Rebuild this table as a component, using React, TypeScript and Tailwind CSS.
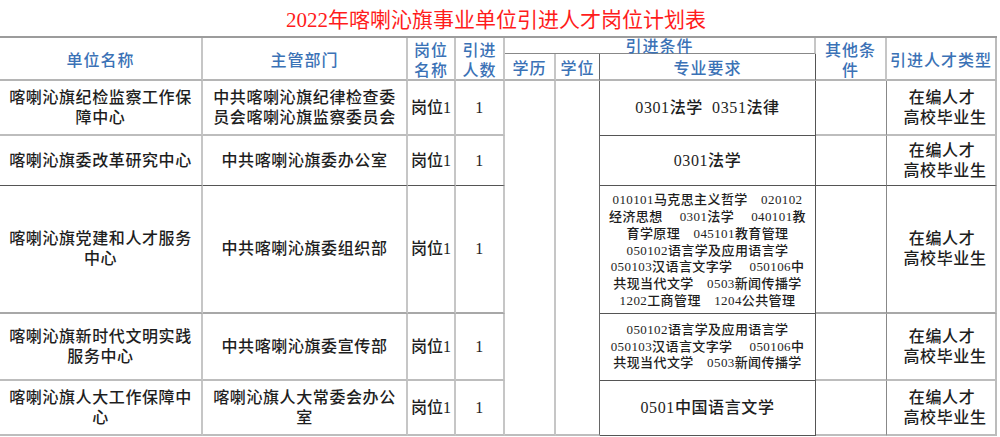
import React from "react";

const HF = "text-[#3b72b6] font-['Noto_Sans_CJK_SC',sans-serif] font-medium text-center align-middle p-0 text-[16px]";
const H = `${HF} leading-[20px] tracking-[1px]`;
const BF = "text-[#1e1e1e] font-['Liberation_Serif','Noto_Sans_CJK_SC',serif] font-medium text-center align-middle p-0";
const B = `${BF} text-[16px] leading-[20px] tracking-[0.6px]`;
const BS = `${BF} text-[13px] leading-[16.8px] tracking-[0.4px]`;
const V = "border-r-2 border-r-[#c6c6c6]";
const ZV = "border-r border-r-[#555]";

function L({ children }: { children: React.ReactNode }) {
  return <div className="whitespace-pre text-center">{children}</div>;
}

type Row = {
  h: string;
  unit: React.ReactNode;
  dept: React.ReactNode;
  major: React.ReactNode;
  majorSmall?: boolean;
  bb: string;
};

const rows: Row[] = [
  {
    h: "h-[55px]",
    unit: <>喀喇沁旗纪检监察工作保<br />障中心</>,
    dept: <>中共喀喇沁旗纪律检查委<br />员会喀喇沁旗监察委员会</>,
    major: <span className="whitespace-pre">0301法学  0351法律</span>,
    bb: "border-b-2 border-b-[#bdbdbd]",
  },
  {
    h: "h-[50px]",
    unit: <>喀喇沁旗委改革研究中心</>,
    dept: <>中共喀喇沁旗委办公室</>,
    major: <>0301法学</>,
    bb: "border-b border-b-[#555]",
  },
  {
    h: "h-[128px]",
    unit: <>喀喇沁旗党建和人才服务<br />中心</>,
    dept: <>中共喀喇沁旗委组织部</>,
    majorSmall: true,
    major: (
      <div className="pt-[3px]">
        <L>010101马克思主义哲学　020102</L>
        <L>经济思想　 0301法学　 040101教</L>
        <L>育学原理　045101教育管理</L>
        <L>050102语言学及应用语言学</L>
        <L>050103汉语言文字学　 050106中</L>
        <L>共现当代文学　0503新闻传播学</L>
        <L>1202工商管理　1204公共管理</L>
      </div>
    ),
    bb: "border-b-2 border-b-[#a8a8a8]",
  },
  {
    h: "h-[67px]",
    unit: <>喀喇沁旗新时代文明实践<br />服务中心</>,
    dept: <>中共喀喇沁旗委宣传部</>,
    majorSmall: true,
    major: (
      <div>
        <L>050102语言学及应用语言学</L>
        <L>050103汉语言文字学　 050106中</L>
        <L>共现当代文学　0503新闻传播学</L>
      </div>
    ),
    bb: "border-b-2 border-b-[#bdbdbd]",
  },
  {
    h: "h-[55px]",
    unit: <>喀喇沁旗人大工作保障中<br />心</>,
    dept: <>喀喇沁旗人大常委会办公<br />室</>,
    major: <>0501中国语言文学</>,
    bb: "border-b-2 border-b-[#bdbdbd]",
  },
];

export default function App() {
  return (
    <div className="w-[1000px] h-[437px] bg-white overflow-hidden">
      <div className="h-[36px] flex items-center justify-center">
        <div className="text-[#ff1c1c] font-['Liberation_Serif','Noto_Sans_CJK_SC',serif] text-[21px] leading-none pt-[4px] mr-[8px]">
          2022年喀喇沁旗事业单位引进人才岗位计划表
        </div>
      </div>
      <table className="table-fixed border-separate border-spacing-0 w-[997px] border-t-2 border-t-[#9c9c9c]">
        <colgroup>
          <col className="w-[203px]" />
          <col className="w-[205px]" />
          <col className="w-[48px]" />
          <col className="w-[49px]" />
          <col className="w-[51px]" />
          <col className="w-[44px]" />
          <col className="w-[216px]" />
          <col className="w-[71px]" />
          <col className="w-[110px]" />
        </colgroup>
        <thead>
          <tr className="h-[15px]">
            <th rowSpan={2} className={`${H} ${V} border-b-2 border-b-[#b5b5b5]`}>单位名称</th>
            <th rowSpan={2} className={`${H} ${V} border-b-2 border-b-[#b5b5b5]`}>主管部门</th>
            <th rowSpan={2} className={`${H} ${V} border-b-2 border-b-[#b5b5b5]`}>岗位<br />名称</th>
            <th rowSpan={2} className={`${H} ${V} border-b-2 border-b-[#b5b5b5]`}>引进<br />人数</th>
            <th colSpan={3} className={`${HF} leading-[14px] tracking-[1px] ${V} border-b border-b-[#888]`}>
              <div className="h-[15px] overflow-visible">引进条件</div>
            </th>
            <th rowSpan={2} className={`${H} ${V} border-b-2 border-b-[#b5b5b5]`}>其他条<br />件</th>
            <th rowSpan={2} className={`${H} border-r-2 border-r-[#bcbcbc] border-b-2 border-b-[#b5b5b5]`}>引进人才类型</th>
          </tr>
          <tr className="h-[27px]">
            <th className={`${H} ${V} border-b-2 border-b-[#b5b5b5]`}>学历</th>
            <th className={`${H} border-r border-r-[#666] border-b-2 border-b-[#b5b5b5]`}>学位</th>
            <th className={`${H} ${ZV} border-b-2 border-b-[#b5b5b5]`}>专业要求</th>
          </tr>
        </thead>
        <tbody>
          {rows.map((r, i) => (
            <tr key={i} className={r.h}>
              <td className={`${B} ${V} ${r.bb}`}>{r.unit}</td>
              <td className={`${B} ${V} ${r.bb}`}>{r.dept}</td>
              <td className={`${BF} text-[16px] leading-[20px] ${V} ${r.bb}`}>岗位1</td>
              <td className={`${B} ${V} ${r.bb}`}>1</td>
              {i === 0 && (
                <>
                  <td rowSpan={5} className={`${B} ${V} border-b-2 border-b-[#bdbdbd]`}></td>
                  <td rowSpan={5} className={`${B} border-r border-r-[#666] border-b-2 border-b-[#bdbdbd]`}></td>
                </>
              )}
              <td className={`${r.majorSmall ? BS : B} ${ZV} border-b border-b-[#555]`}>{r.major}</td>
              <td className={`${B} border-r border-r-[#888] ${r.bb}`}></td>
              <td className={`${B} border-r-2 border-r-[#bcbcbc] ${r.bb}`}>
                <div className="pl-[2px]">在编人才</div>
                <div className="pl-[8px]">高校毕业生</div>
              </td>
            </tr>
          ))}
        </tbody>
      </table>
    </div>
  );
}
